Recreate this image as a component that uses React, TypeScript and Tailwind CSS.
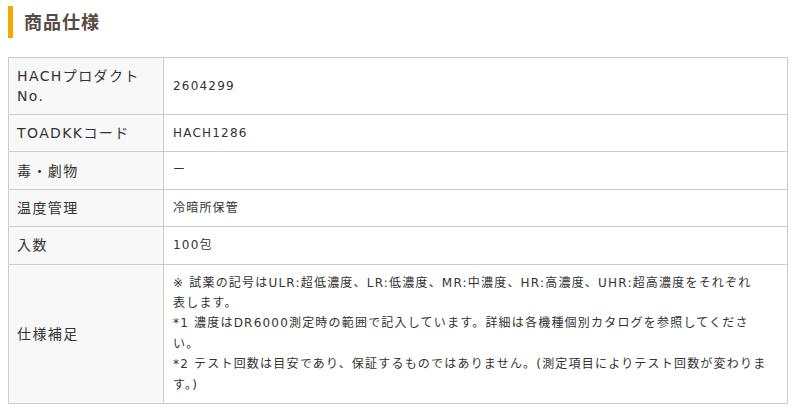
const rows: { label: string; value: React.ReactNode }[] = [
  { label: "HACHプロダクトNo.", value: "2604299" },
  { label: "TOADKKコード", value: "HACH1286" },
  { label: "毒・劇物", value: "ー" },
  { label: "温度管理", value: "冷暗所保管" },
  { label: "入数", value: "100包" },
  {
    label: "仕様補足",
    value: (
      <>
        ※ 試薬の記号はULR:超低濃度、LR:低濃度、MR:中濃度、HR:高濃度、UHR:超高濃度をそれぞれ
        <br />
        表します。
        <br />
        *1 濃度はDR6000測定時の範囲で記入しています。詳細は各機種個別カタログを参照してくださ
        <br />
        い。
        <br />
        *2 テスト回数は目安であり、保証するものではありません。(測定項目によりテスト回数が変わりま
        <br />
        す。)
      </>
    ),
  },
];

export default function App() {
  return (
    <div
      className="min-h-screen bg-white p-2 text-[#333]"
      style={{ fontFamily: '"DejaVu Sans", "Noto Sans CJK JP", sans-serif' }}
    >
      {/* Section heading */}
      <div className="mt-[-2px] flex h-8 items-center border-l-[5px] border-[#f5a800] pl-[11px]">
        <h2 className="text-[18px] font-bold tracking-[1px] text-[#574a42]">商品仕様</h2>
      </div>

      <table className="mt-[19px] w-[780px] border-collapse border border-[#cccccc]">
        <tbody>
          {rows.map((row) => (
            <tr key={row.label}>
              <th className="w-[155px] border border-[#cccccc] bg-[#f8f8f8] py-2 pl-2 pr-4 text-left align-middle text-[14px] font-normal leading-[20px] tracking-[0.1em]">
                {row.label}
              </th>
              <td className="border border-[#cccccc] py-2 pl-[9px] pr-[12px] align-middle text-[12px] leading-[20.4px] tracking-[1.2px]">
                {row.value}
              </td>
            </tr>
          ))}
        </tbody>
      </table>
    </div>
  );
}
